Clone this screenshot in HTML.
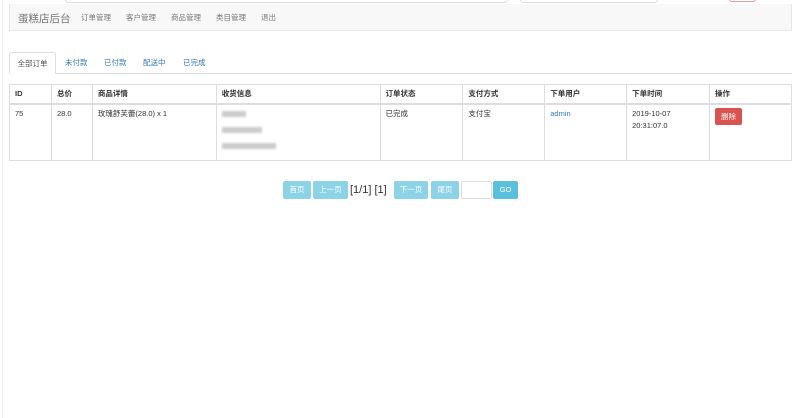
<!DOCTYPE html>
<html><head><meta charset="utf-8"><style>
*{box-sizing:border-box;margin:0;padding:0}
body{width:800px;height:418px;background:#fff;font-family:"Liberation Sans","Noto Sans CJK SC",sans-serif;font-size:8px;color:#333;position:relative;overflow:hidden}
.abs{position:absolute}
.top1{left:65px;top:-6px;width:443px;height:9px;border:1px solid #ddd;border-radius:3px}
.top2{left:520px;top:-6px;width:138px;height:9px;border:1px solid #ddd;border-radius:3px}
.top3{left:729px;top:-6px;width:27px;height:8px;border:1px solid #e0a0a0;border-radius:3px}
.lb{left:2px;top:0;width:1px;height:418px;background:#eee}
.nav{left:9px;top:4px;width:783px;height:27px;background:#f8f8f8;border:1px solid #e7e7e7;border-top:none}
.brand{left:18px;top:11px;font-size:10.5px;color:#777}
.nl{top:12px;font-size:7.5px;color:#777}
.tabs{left:9px;top:73px;width:783px;height:1px;background:#ddd}
.tab{top:52px;height:22px;font-size:7.5px;color:#337ab7;line-height:21px}
.act{left:9px;width:47px;border:1px solid #ddd;border-bottom-color:#fff;background:#fff;color:#555;text-align:center;border-radius:3px 3px 0 0}
table{position:absolute;left:9px;top:84px;width:783px;border-collapse:collapse;font-size:7.5px}
td,th{border:1px solid #ddd;text-align:left;vertical-align:top;padding:0 5px}
th{height:19px;line-height:17px;font-weight:bold;border-bottom-width:2px}
td{height:57px;line-height:12px;padding-top:3px}
.blur{display:inline-block;background:#ccc;filter:blur(1px);height:6px;vertical-align:middle}
.btn{top:181px;height:18px;background:#8dd3e8;color:#fff;border-radius:2px;font-size:7.5px;line-height:18px;text-align:center}
.del{display:inline-block;background:#d9534f;color:#fff;border-radius:2px;padding:0 6px;height:17px;line-height:17px}
</style></head><body>
<div class="abs lb"></div>
<div class="abs top1"></div><div class="abs top2"></div><div class="abs top3"></div>
<div class="abs nav"></div>
<div class="abs brand">蛋糕店后台</div>
<div class="abs nl" style="left:81px">订单管理</div>
<div class="abs nl" style="left:126px">客户管理</div>
<div class="abs nl" style="left:171px">商品管理</div>
<div class="abs nl" style="left:216px">类目管理</div>
<div class="abs nl" style="left:261px">退出</div>
<div class="abs tabs"></div>
<div class="abs tab act">全部订单</div>
<div class="abs tab" style="left:65px">未付款</div>
<div class="abs tab" style="left:104px">已付款</div>
<div class="abs tab" style="left:143px">配送中</div>
<div class="abs tab" style="left:183px">已完成</div>
<table>
<colgroup><col style="width:42px"><col style="width:41px"><col style="width:124px"><col style="width:164px"><col style="width:83px"><col style="width:82px"><col style="width:82px"><col style="width:83px"><col style="width:82px"></colgroup>
<tr><th>ID</th><th>总价</th><th>商品详情</th><th>收货信息</th><th>订单状态</th><th>支付方式</th><th>下单用户</th><th>下单时间</th><th>操作</th></tr>
<tr><td>75</td><td>28.0</td><td>玫瑰舒芙蕾(28.0) x 1</td><td><span class="blur" style="width:24px"></span><br><span style="line-height:20px"><span class="blur" style="width:40px"></span></span><br><span class="blur" style="width:54px"></span></td><td>已完成</td><td>支付宝</td><td style="color:#337ab7">admin</td><td>2019-10-07<br>20:31:07.0</td><td><span class="del">删除</span></td></tr>
</table>
<div class="abs btn" style="left:283px;width:28px">首页</div>
<div class="abs btn" style="left:313px;width:35px">上一页</div>
<div class="abs" style="left:350px;top:181px;font-size:11px;line-height:18px;color:#333">[1/1] [1]</div>
<div class="abs btn" style="left:394px;width:34px">下一页</div>
<div class="abs btn" style="left:431px;width:28px">尾页</div>
<div class="abs" style="left:461px;top:181px;width:31px;height:18px;border:1px solid #ddd;border-radius:2px"></div>
<div class="abs btn" style="left:493px;width:25px;background:#5bc0de">GO</div>
</body></html>
